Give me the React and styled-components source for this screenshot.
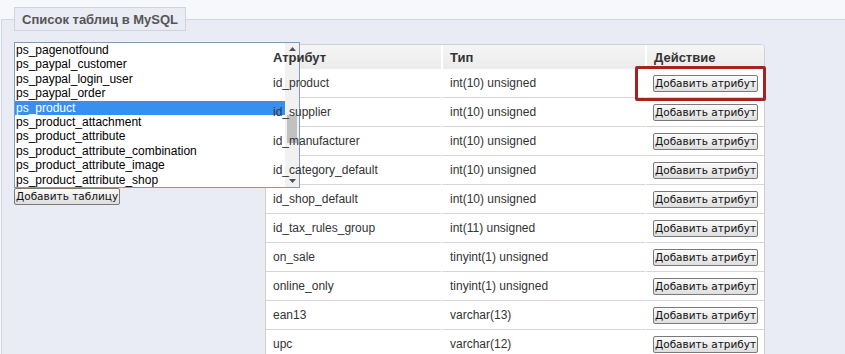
import React from 'react';
import styled, { createGlobalStyle } from 'styled-components';

const GlobalStyle = createGlobalStyle`
  html, body {
    margin: 0;
    padding: 0;
    background: #f7f8fb;
    overflow: hidden;
    font-family: "Liberation Sans", Arial, sans-serif;
  }
`;

const tables = [
  'ps_pagenotfound',
  'ps_paypal_customer',
  'ps_paypal_login_user',
  'ps_paypal_order',
  'ps_product',
  'ps_product_attachment',
  'ps_product_attribute',
  'ps_product_attribute_combination',
  'ps_product_attribute_image',
  'ps_product_attribute_shop',
];

const columns = [
  ['id_product', 'int(10) unsigned'],
  ['id_supplier', 'int(10) unsigned'],
  ['id_manufacturer', 'int(10) unsigned'],
  ['id_category_default', 'int(10) unsigned'],
  ['id_shop_default', 'int(10) unsigned'],
  ['id_tax_rules_group', 'int(11) unsigned'],
  ['on_sale', 'tinyint(1) unsigned'],
  ['online_only', 'tinyint(1) unsigned'],
  ['ean13', 'varchar(13)'],
  ['upc', 'varchar(12)'],
];

const Panel = styled.fieldset`
  margin: 7px 0 0 1px;
  width: 900px;
  min-width: 0;
  border: 1px solid #d2d6de;
  background: #e9ecf4;
  padding: 11px 12px 20px 12px;
`;

const Legend = styled.legend`
  margin: 0;
  padding: 0 7px;
  height: 24px;
  box-sizing: border-box;
  border: 1px solid #cfd3db;
  background: #e9ecf4;
  color: #555;
  font-weight: bold;
  font-size: 13px;
  line-height: 23px;
`;

const Row = styled.div`
  display: flex;
  align-items: flex-start;
`;

const LeftCol = styled.div`
  width: 286px;
  margin-right: -35px;
  position: relative;
  z-index: 1;
  display: flex;
  flex-direction: column;
  align-items: flex-start;
`;

const ListBox = styled.div`
  width: 286px;
  height: 146px;
  box-sizing: border-box;
  border: 1px solid #7f9db9;
  background: #fff;
  display: flex;
`;

const Options = styled.div`
  flex: 1;
  overflow: hidden;
`;

const Option = styled.div`
  height: 14.4px;
  line-height: 14.4px;
  padding-left: 1px;
  font-size: 12px;
  white-space: nowrap;
  color: ${p => (p.$selected ? '#fff' : '#000')};
  background: ${p => (p.$selected ? '#3790f0' : 'transparent')};
`;

const Scrollbar = styled.div`
  width: 14px;
  background: #f1f1f1;
  display: flex;
  flex-direction: column;
  align-items: center;
`;

const Arrow = styled.div`
  height: 12px;
  display: flex;
  align-items: center;
  justify-content: center;
`;

const Track = styled.div`
  flex: 1;
  width: 100%;
  display: flex;
  flex-direction: column;
  align-items: center;
  padding-top: 60px;
  box-sizing: border-box;
`;

const Thumb = styled.div`
  width: 10px;
  height: 28px;
  background: #c1c1c1;
`;

const Btn = styled.button`
  height: 17px;
  padding: 0 1px;
  margin: 0;
  border: 1px solid #7a7a7a;
  border-radius: 2px;
  background: linear-gradient(#fbfbfb, #dedede);
  color: #111;
  font-family: "DejaVu Sans", sans-serif;
  font-size: 10.5px;
  line-height: 15px;
  white-space: nowrap;
`;

const TableWrap = styled.div`
  margin-top: 2px;
`;

const Table = styled.table`
  width: 500px;
  box-sizing: border-box;
  table-layout: fixed;
  border-collapse: separate;
  border-spacing: 0;
  border: 1px solid #cfcfcf;
  border-radius: 0 4px 0 0;
  background: #fff;
`;

const Th = styled.th`
  width: ${p => p.$w}px;
  box-sizing: border-box;
  height: 24px;
  padding: 0 7px;
  text-align: left;
  font-size: 13px;
  font-weight: bold;
  color: #333;
  background: linear-gradient(#f5f5f5, #ebebeb);
  & + & {
    border-left: 2px solid #fff;
  }
  &:last-child {
    border-radius: 0 3px 0 0;
  }
`;

const Td = styled.td`
  box-sizing: border-box;
  height: 29px;
  padding: 0 ${p => (p.$action ? 6 : 7)}px;
  border-bottom: 1px solid #d6d6d6;
  font-size: 12px;
  color: #333;
  position: ${p => (p.$mark ? 'relative' : 'static')};
  & + & {
    border-left: 2px solid #fff;
  }
`;

const CellText = styled.span`
  position: relative;
  z-index: 2;
`;

const Highlight = styled.div`
  position: absolute;
  left: -12px;
  top: -3px;
  width: 131px;
  height: 35px;
  box-sizing: border-box;
  border: 3px solid #a8201f;
  border-radius: 2px;
`;

function UpArrow() {
  return (
    <svg width="7" height="4" viewBox="0 0 7 4">
      <path d="M0 4 L3.5 0 L7 4 Z" fill="#505050" />
    </svg>
  );
}

function DownArrow() {
  return (
    <svg width="7" height="4" viewBox="0 0 7 4">
      <path d="M0 0 L3.5 4 L7 0 Z" fill="#505050" />
    </svg>
  );
}

export default function App() {
  return (
    <>
      <GlobalStyle />
      <Panel>
        <Legend>Список таблиц в MySQL</Legend>
        <Row>
          <LeftCol>
            <ListBox>
              <Options>
                {tables.map(t => (
                  <Option key={t} $selected={t === 'ps_product'}>
                    {t}
                  </Option>
                ))}
              </Options>
              <Scrollbar>
                <Arrow>
                  <UpArrow />
                </Arrow>
                <Track>
                  <Thumb />
                </Track>
                <Arrow>
                  <DownArrow />
                </Arrow>
              </Scrollbar>
            </ListBox>
            <Btn>Добавить таблицу</Btn>
          </LeftCol>
          <TableWrap>
            <Table>
              <thead>
                <tr>
                  <Th $w={175}>
                    <CellText>Атрибут</CellText>
                  </Th>
                  <Th $w={204}>Тип</Th>
                  <Th $w={119}>Действие</Th>
                </tr>
              </thead>
              <tbody>
                {columns.map(([name, type], i) => (
                  <tr key={name}>
                    <Td>
                      <CellText>{name}</CellText>
                    </Td>
                    <Td>{type}</Td>
                    <Td $action $mark={i === 0}>
                      <Btn>Добавить атрибут</Btn>
                      {i === 0 && <Highlight />}
                    </Td>
                  </tr>
                ))}
              </tbody>
            </Table>
          </TableWrap>
        </Row>
      </Panel>
    </>
  );
}
